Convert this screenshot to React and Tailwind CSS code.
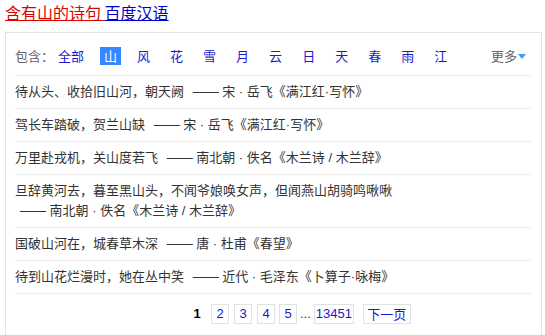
export default function App() {
  const filters = ["山", "风", "花", "雪", "月", "云", "日", "天", "春", "雨", "江"];
  const rows = [
    ["待从头、收拾旧山河，朝天阙", "—— 宋 · 岳飞《满江红·写怀》"],
    ["驾长车踏破，贺兰山缺", "—— 宋 · 岳飞《满江红·写怀》"],
    ["万里赴戎机，关山度若飞", "—— 南北朝 · 佚名《木兰诗 / 木兰辞》"],
    ["旦辞黄河去，暮至黑山头，不闻爷娘唤女声，但闻燕山胡骑鸣啾啾", "—— 南北朝 · 佚名《木兰诗 / 木兰辞》"],
    ["国破山河在，城春草木深", "—— 唐 · 杜甫《春望》"],
    ["待到山花烂漫时，她在丛中笑", "—— 近代 · 毛泽东《卜算子·咏梅》"],
  ];
  const font = { fontFamily: '"Noto Sans CJK SC", "Liberation Sans", sans-serif' };
  const latinFirst = { fontFamily: '"Liberation Sans", "Noto Sans CJK SC", sans-serif' };
  return (
    <div className="bg-white w-[545px] h-[335px] overflow-hidden pl-[5px]" style={font}>
      <div className="pt-[2px] text-[16px] leading-[20px]">
        <a className="text-[#e00000] underline">含有山的诗句 </a>
        <a className="text-[#0000cc] underline">百度汉语</a>
      </div>
      <div className="mt-[10px] w-[537px] border border-[#e3e3e3] px-[9px] pb-[20px]">
        <div className="flex items-center pt-[14px] pb-[10px] border-b border-[#eeeeee] text-[13px] leading-[18px]">
          <span className="text-[#666666]">包含：</span>
          <span className="px-[4px] text-[#1a1acc]">全部</span>
          {filters.map((f, i) => (
            <span
              key={f}
              className={
                i === 0
                  ? "ml-[12px] px-[4px] bg-[#3388ff] text-white"
                  : "ml-[12px] px-[4px] text-[#1a1acc]"
              }
            >
              {f}
            </span>
          ))}
          <span className="ml-auto mr-[6px] flex items-center text-[#666666]">
            更多
            <svg width="8" height="5" viewBox="0 0 8 5" className="ml-[1px] mt-[1px]">
              <polygon points="0,0 8,0 4,5" fill="#3b9bf5" />
            </svg>
          </span>
        </div>
        {rows.map(([a, b], i) => (
          <div key={i} className="py-[6px] border-b border-[#eeeeee] text-[13px] leading-[20px] text-[#333333]" style={latinFirst}>
            <span>{a}</span>{" "}
            <span className="inline-block pl-[5px]">{b}</span>
          </div>
        ))}
        <div className="flex items-center pt-[10px] text-[13px] leading-[18px]" style={latinFirst}>
          <span className="ml-[173px] w-[18px] text-center font-bold text-black">1</span>
          <span className="ml-[5px] w-[18px] h-[20px] border border-[#e1e1e1] flex items-center justify-center text-[#1a1acc]">2</span>
          <span className="ml-[5px] w-[18px] h-[20px] border border-[#e1e1e1] flex items-center justify-center text-[#1a1acc]">3</span>
          <span className="ml-[5px] w-[18px] h-[20px] border border-[#e1e1e1] flex items-center justify-center text-[#1a1acc]">4</span>
          <span className="ml-[4px] w-[18px] h-[20px] border border-[#e1e1e1] flex items-center justify-center text-[#1a1acc]">5</span>
          <span className="ml-[3px] text-[#333333]">...</span>
          <span className="ml-[3px] w-[40px] h-[20px] border border-[#e1e1e1] flex items-center justify-center text-[#1a1acc]">13451</span>
          <span className="ml-[9px] w-[48px] h-[20px] border border-[#e1e1e1] flex items-center justify-center text-[#1a1acc]" style={font}>下一页</span>
        </div>
      </div>
    </div>
  );
}
